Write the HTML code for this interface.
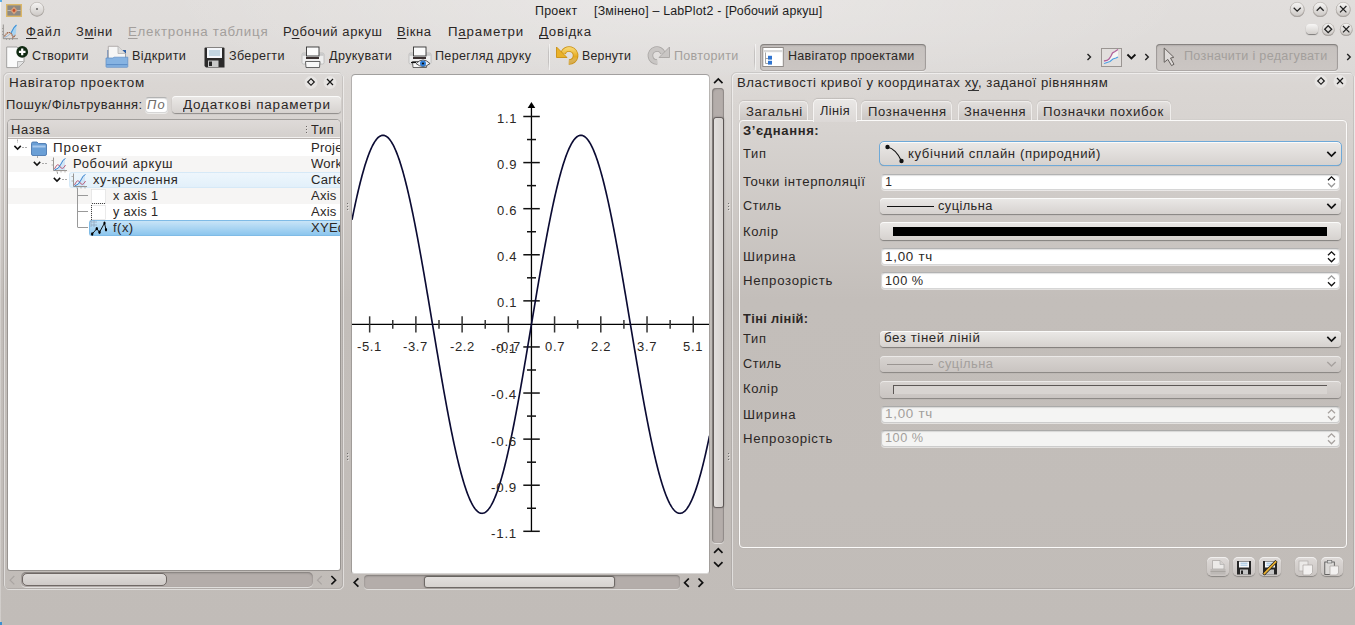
<!DOCTYPE html>
<html><head><meta charset="utf-8"><style>
html,body{margin:0;padding:0;width:1355px;height:625px;overflow:hidden;}
body{position:relative;font-family:"Liberation Sans", sans-serif;background:radial-gradient(ellipse 520px 110px at 678px 0px,rgba(255,255,255,0.28),rgba(255,255,255,0) 100%),linear-gradient(to bottom,#e1dedc 0px,#dfdcda 40px,#dcd9d7 72px,#dad6d3 85px,#d7d3d0 130px,#c3beba 300px,#c2bdb9 500px,#c1bcb8 625px);}
u{text-decoration:underline;text-underline-offset:2px;}
svg{display:block}
</style></head><body>
<svg style="position:absolute;left:6px;top:3.5px;overflow:visible;" width="16" height="13" viewBox="0 0 16 13"><rect x="0.7" y="0.7" width="14.6" height="11.6" fill="#8d8984" stroke="#dcb768" stroke-width="1.4"/><path d="M1.5 6.5 H14.5" stroke="#c8c4c0" stroke-width="0.8"/><path d="M8 2.5 L11.5 6.5 L8 10.5 L4.5 6.5Z" fill="#d9a07a"/><circle cx="8" cy="6.5" r="1.4" fill="#c2502e"/></svg>
<svg style="position:absolute;left:28.5px;top:1.3000000000000007px;overflow:visible;" width="16" height="17" viewBox="0 0 16 17"><defs><linearGradient id="g36593" x1="0" y1="0" x2="0" y2="1"><stop offset="0" stop-color="#f6f5f4"/><stop offset="1" stop-color="#cdc9c6"/></linearGradient></defs><circle cx="8" cy="8.5" r="7.2" fill="#8f8a86" opacity="0.8"/><circle cx="8" cy="8" r="6.7" fill="url(#g36593)" stroke="#bdb8b4" stroke-width="0.6"/><circle cx="8" cy="8" r="0.9" fill="#555"/></svg>
<div style="position:absolute;left:534.90px;top:3.74px;font-size:12px;line-height:normal;transform:scaleX(1.0325);transform-origin:0 0;letter-spacing:0.249px;color:#1c1c1c;white-space:pre;z-index:5">Проект</div>
<div style="position:absolute;left:593.90px;top:3.74px;font-size:12px;line-height:normal;transform:scaleX(1.0325);transform-origin:0 0;letter-spacing:0.182px;color:#1c1c1c;white-space:pre;z-index:5">[Змінено] – LabPlot2 - [Робочий аркуш]</div>
<svg style="position:absolute;left:1289.3px;top:1.3999999999999995px;overflow:visible;" width="16.4" height="17.4" viewBox="0 0 16.4 17.4"><defs><linearGradient id="g1297596" x1="0" y1="0" x2="0" y2="1"><stop offset="0" stop-color="#f6f5f4"/><stop offset="1" stop-color="#cdc9c6"/></linearGradient></defs><circle cx="8.2" cy="8.7" r="7.4" fill="#8f8a86" opacity="0.8"/><circle cx="8.2" cy="8.2" r="6.9" fill="url(#g1297596)" stroke="#bdb8b4" stroke-width="0.6"/><path d="M4.699999999999999 6.699999999999999 L8.2 10.2 L11.7 6.699999999999999" stroke="#222" stroke-width="1.25" fill="none"/></svg>
<svg style="position:absolute;left:1312.1px;top:1.3999999999999995px;overflow:visible;" width="16.4" height="17.4" viewBox="0 0 16.4 17.4"><defs><linearGradient id="g1320396" x1="0" y1="0" x2="0" y2="1"><stop offset="0" stop-color="#f6f5f4"/><stop offset="1" stop-color="#cdc9c6"/></linearGradient></defs><circle cx="8.2" cy="8.7" r="7.4" fill="#8f8a86" opacity="0.8"/><circle cx="8.2" cy="8.2" r="6.9" fill="url(#g1320396)" stroke="#bdb8b4" stroke-width="0.6"/><path d="M4.699999999999999 9.7 L8.2 6.199999999999999 L11.7 9.7" stroke="#222" stroke-width="1.25" fill="none"/></svg>
<svg style="position:absolute;left:1335.1px;top:1.3999999999999995px;overflow:visible;" width="16.4" height="17.4" viewBox="0 0 16.4 17.4"><defs><linearGradient id="g1343396" x1="0" y1="0" x2="0" y2="1"><stop offset="0" stop-color="#f6f5f4"/><stop offset="1" stop-color="#cdc9c6"/></linearGradient></defs><circle cx="8.2" cy="8.7" r="7.4" fill="#8f8a86" opacity="0.8"/><circle cx="8.2" cy="8.2" r="6.9" fill="url(#g1343396)" stroke="#bdb8b4" stroke-width="0.6"/><path d="M4.999999999999999 4.999999999999999 L11.399999999999999 11.399999999999999 M11.399999999999999 4.999999999999999 L4.999999999999999 11.399999999999999" stroke="#222" stroke-width="1.2" fill="none"/></svg>
<svg style="position:absolute;left:2px;top:24px;overflow:visible;" width="16" height="16" viewBox="0 0 16 16"><path d="M11 13 L9 8 L12 3 L14.5 1 L14 9 L12 13Z" fill="#a9d3f0"/><path d="M9 9 L12 3.5 L14.5 1" stroke="#3f92d6" stroke-width="1.1" fill="none"/><path d="M1.3 0.5 V14.7 H16" stroke="#8c8885" stroke-width="0.9" fill="none"/><path d="M0 4.5 H1.3 M0 7.5 H1.3 M0 10.5 H1.3 M4.5 14.7 V16 M7.5 14.7 V16 M10.5 14.7 V16" stroke="#9a9693" stroke-width="0.8"/><path d="M2.5 12.5 Q4.5 8.5 7 8.5 T11 13.5 L13.5 11" stroke="#9a5a3a" stroke-width="1.2" fill="none" stroke-dasharray="1.4 0.6"/><path d="M2.5 13.5 Q6 12 8 10" stroke="#9ab8d8" stroke-width="1" fill="none"/></svg>
<div style="position:absolute;left:25.60px;top:25.34px;font-size:12px;line-height:normal;transform:scaleX(1.0844);transform-origin:0 0;letter-spacing:0.766px;color:#2b2725;white-space:pre;z-index:5"><u>Ф</u>айл</div>
<div style="position:absolute;left:75.90px;top:25.34px;font-size:12px;line-height:normal;transform:scaleX(1.0746);transform-origin:0 0;letter-spacing:0.547px;color:#2b2725;white-space:pre;z-index:5">З<u>м</u>іни</div>
<div style="position:absolute;left:127.50px;top:25.34px;font-size:12px;line-height:normal;transform:scaleX(1.1089);transform-origin:0 0;letter-spacing:0.662px;color:#a39f9c;white-space:pre;z-index:5"><u>Е</u>лектронна таблиця</div>
<div style="position:absolute;left:282.90px;top:25.34px;font-size:12px;line-height:normal;transform:scaleX(1.0832);transform-origin:0 0;letter-spacing:0.543px;color:#2b2725;white-space:pre;z-index:5">Р<u>о</u>бочий аркуш</div>
<div style="position:absolute;left:397.40px;top:25.34px;font-size:12px;line-height:normal;transform:scaleX(1.0832);transform-origin:0 0;letter-spacing:0.561px;color:#2b2725;white-space:pre;z-index:5"><u>В</u>ікна</div>
<div style="position:absolute;left:447.80px;top:25.34px;font-size:12px;line-height:normal;transform:scaleX(1.1052);transform-origin:0 0;letter-spacing:0.738px;color:#2b2725;white-space:pre;z-index:5">П<u>а</u>раметри</div>
<div style="position:absolute;left:538.60px;top:25.34px;font-size:12px;line-height:normal;transform:scaleX(1.1022);transform-origin:0 0;letter-spacing:0.667px;color:#2b2725;white-space:pre;z-index:5"><u>Д</u>овідка</div>
<div style="position:absolute;left:1305.8px;top:24px;width:12.2px;height:10px;background:linear-gradient(#f7f6f5,#d3cfcc);border-radius:4px;box-shadow:0 1px 1px rgba(0,0,0,0.45)"></div>
<svg style="position:absolute;left:1320.7px;top:22.1px;overflow:visible;" width="14.4" height="15.4" viewBox="0 0 14.4 15.4"><defs><linearGradient id="g13279293" x1="0" y1="0" x2="0" y2="1"><stop offset="0" stop-color="#f6f5f4"/><stop offset="1" stop-color="#cdc9c6"/></linearGradient></defs><circle cx="7.2" cy="7.7" r="6.4" fill="#8f8a86" opacity="0.8"/><circle cx="7.2" cy="7.2" r="5.9" fill="url(#g13279293)" stroke="#bdb8b4" stroke-width="0.6"/><path d="M7.2 3.7 L10.7 7.2 L7.2 10.7 L3.7 7.2 Z" stroke="#222" stroke-width="1.3" fill="none"/></svg>
<svg style="position:absolute;left:1338.8999999999999px;top:22.1px;overflow:visible;" width="14.4" height="15.4" viewBox="0 0 14.4 15.4"><defs><linearGradient id="g13461293" x1="0" y1="0" x2="0" y2="1"><stop offset="0" stop-color="#f6f5f4"/><stop offset="1" stop-color="#cdc9c6"/></linearGradient></defs><circle cx="7.2" cy="7.7" r="6.4" fill="#8f8a86" opacity="0.8"/><circle cx="7.2" cy="7.2" r="5.9" fill="url(#g13461293)" stroke="#bdb8b4" stroke-width="0.6"/><path d="M4.0 4.0 L10.4 10.4 M10.4 4.0 L4.0 10.4" stroke="#222" stroke-width="1.2" fill="none"/></svg>
<svg style="position:absolute;left:6px;top:46px;overflow:visible;" width="22" height="22" viewBox="0 0 22 22"><path d="M0.7 1 H11 L18 8 V16 L12 21.6 H0.7 Z" fill="#fafafa" stroke="#9a9897" stroke-width="0.9"/><path d="M11.5 21.3 V15.5 H17.6" fill="#e2e2e2" stroke="#aaa" stroke-width="0.8"/><circle cx="16.2" cy="5.9" r="5.9" fill="#102a12"/><path d="M16.2 2.6 V9.2 M12.9 5.9 H19.5" stroke="#fff" stroke-width="2.2"/></svg>
<div style="position:absolute;left:32.20px;top:49.14px;font-size:12px;line-height:normal;transform:scaleX(1.0365);transform-origin:0 0;letter-spacing:0.265px;color:#2b2725;white-space:pre;z-index:5">Створити</div>
<svg style="position:absolute;left:105px;top:45px;overflow:visible;" width="24" height="24" viewBox="0 0 24 24"><path d="M2.5 5 H21 V14 H2.5Z" fill="#2d5fa8"/><path d="M3.3 1.3 H13 L20.5 8.5 V14 H3.3Z" fill="#f6f6f6" stroke="#a3a09e" stroke-width="0.8"/><path d="M13 1.3 V8.5 H20.5" fill="#dcdcdc" stroke="#aaa" stroke-width="0.7"/><path d="M1 13 H8 L9 12.2 H22.8 V21.5 Q22.8 22.3 22 22.3 H1.8 Q1 22.3 1 21.5Z" fill="#86b3e2" stroke="#5d8cc4" stroke-width="0.7"/><rect x="1.3" y="19" width="21.2" height="1.2" fill="#5f8fc8"/></svg>
<div style="position:absolute;left:131.80px;top:49.14px;font-size:12px;line-height:normal;transform:scaleX(1.0557);transform-origin:0 0;letter-spacing:0.365px;color:#2b2725;white-space:pre;z-index:5">Відкрити</div>
<svg style="position:absolute;left:203.5px;top:46.5px;overflow:visible;" width="21" height="21" viewBox="0 0 21 21"><path d="M0.5 1.5 Q0.5 0.5 1.5 0.5 H19.5 Q20.5 0.5 20.5 1.5 V20.5 H2 L0.5 19Z" fill="#2b2a2a"/><rect x="3" y="1" width="15" height="10" fill="#f4f6fa"/><path d="M5 4 H16 M5 6 H16 M5 8 H16" stroke="#86aec4" stroke-width="0.9"/><rect x="4" y="13.5" width="10.5" height="6.5" fill="#c9c9c9"/><rect x="5" y="14.5" width="3" height="4.5" fill="#262626"/></svg>
<div style="position:absolute;left:229.10px;top:49.14px;font-size:12px;line-height:normal;transform:scaleX(1.0485);transform-origin:0 0;letter-spacing:0.334px;color:#2b2725;white-space:pre;z-index:5">Зберегти</div>
<svg style="position:absolute;left:301px;top:45.5px;overflow:visible;" width="24" height="24" viewBox="0 0 24 24"><rect x="1" y="7" width="22" height="11" rx="1.5" fill="#eeeeee" stroke="#b5b5b5" stroke-width="0.8"/><rect x="1.3" y="7.3" width="21.4" height="2.5" fill="#c8c8c8"/><rect x="5.5" y="1" width="12.5" height="9" fill="#fbfbfb" stroke="#333" stroke-width="0.9"/><rect x="5" y="11" width="13" height="2" fill="#3a3030"/><path d="M4.5 15.5 H19 L18.5 21.5 H5Z" fill="#f7f7f7" stroke="#555" stroke-width="0.9"/></svg>
<div style="position:absolute;left:328.70px;top:49.14px;font-size:12px;line-height:normal;transform:scaleX(1.0518);transform-origin:0 0;letter-spacing:0.350px;color:#2b2725;white-space:pre;z-index:5">Друкувати</div>
<svg style="position:absolute;left:408px;top:45.5px;overflow:visible;" width="24" height="24" viewBox="0 0 24 24"><rect x="1" y="7" width="22" height="11" rx="1.5" fill="#eeeeee" stroke="#b5b5b5" stroke-width="0.8"/><rect x="1.3" y="7.3" width="21.4" height="2.5" fill="#c8c8c8"/><rect x="5.5" y="1" width="12.5" height="9" fill="#fbfbfb" stroke="#333" stroke-width="0.9"/><rect x="5" y="11" width="13" height="2" fill="#3a3030"/><path d="M4.5 15.5 H19 L18.5 21.5 H5Z" fill="#f7f7f7" stroke="#555" stroke-width="0.9"/><path d="M8 17.5 Q15 10.5 22 17.5 Q15 23.5 8 17.5Z" fill="#eef1f6" stroke="#444" stroke-width="0.9"/><circle cx="15" cy="17.5" r="3" fill="#2f7ed8"/><circle cx="15" cy="17.5" r="1.1" fill="#111"/><path d="M3 16.5 H8" stroke="#111" stroke-width="1.2"/></svg>
<div style="position:absolute;left:434.50px;top:49.14px;font-size:12px;line-height:normal;transform:scaleX(1.0484);transform-origin:0 0;letter-spacing:0.311px;color:#2b2725;white-space:pre;z-index:5">Перегляд друку</div>
<div style="position:absolute;left:548px;top:43.5px;width:1px;height:26px;background:linear-gradient(rgba(0,0,0,0),rgba(0,0,0,0.13) 30%,rgba(0,0,0,0.13) 70%,rgba(0,0,0,0));box-shadow:1px 0 0 rgba(255,255,255,0.55)"></div>
<svg style="position:absolute;left:555px;top:45px;overflow:visible;" width="24" height="22" viewBox="0 0 24 22"><defs><linearGradient id="ug" x1="0" y1="0" x2="0" y2="1"><stop offset="0" stop-color="#f6d36a"/><stop offset="0.6" stop-color="#e4a91f"/><stop offset="1" stop-color="#ecd9a8" stop-opacity="0.4"/></linearGradient></defs><path d="M8 8.2 A6.5 6.5 0 1 1 13.8 17" stroke="#c98f12" stroke-width="5.6" fill="none"/><path d="M8 8.2 A6.5 6.5 0 1 1 13.8 17" stroke="url(#ug)" stroke-width="4" fill="none"/><path d="M1.5 2 V12.5 H12Z" fill="#eab22a" stroke="#c98f12" stroke-width="0.9" stroke-linejoin="round"/></svg>
<div style="position:absolute;left:581.60px;top:49.14px;font-size:12px;line-height:normal;transform:scaleX(1.0294);transform-origin:0 0;letter-spacing:0.220px;color:#2b2725;white-space:pre;z-index:5">Вернути</div>
<svg style="position:absolute;left:647px;top:45px;overflow:visible;" width="24" height="22" viewBox="0 0 24 22"><path d="M16 8.2 A6.5 6.5 0 1 0 10.2 17" stroke="#a8a5a3" stroke-width="5.6" fill="none"/><path d="M16 8.2 A6.5 6.5 0 1 0 10.2 17" stroke="#c9c6c4" stroke-width="4" fill="none"/><path d="M22.5 2 V12.5 H12Z" fill="#c9c6c4" stroke="#a8a5a3" stroke-width="0.9" stroke-linejoin="round"/></svg>
<div style="position:absolute;left:673.80px;top:49.14px;font-size:12px;line-height:normal;transform:scaleX(1.0438);transform-origin:0 0;letter-spacing:0.309px;color:#a39f9c;white-space:pre;z-index:5">Повторити</div>
<div style="position:absolute;left:754px;top:43.5px;width:1px;height:26px;background:linear-gradient(rgba(0,0,0,0),rgba(0,0,0,0.13) 30%,rgba(0,0,0,0.13) 70%,rgba(0,0,0,0));box-shadow:1px 0 0 rgba(255,255,255,0.55)"></div>
<div style="position:absolute;left:759.5px;top:43.5px;width:166.0px;height:27.0px;background:linear-gradient(#c6c1be,#cbc6c3);box-shadow:inset 0 0 0 1px rgba(0,0,0,0.13), inset 0 1px 2px rgba(0,0,0,0.30), 0 1px 0 rgba(255,255,255,0.6);border-radius:4px;"></div>
<svg style="position:absolute;left:762px;top:47px;overflow:visible;" width="22" height="20" viewBox="0 0 22 20"><rect x="0.8" y="0.5" width="20.5" height="19" fill="#fff" stroke="#8f8a87" stroke-width="1"/><rect x="1.5" y="3" width="19" height="2.2" fill="#d9d9d9"/><path d="M3.5 5.5 V16.5 M3.5 11.5 H6 M3.5 16.5 H6" stroke="#999" stroke-width="0.9" fill="none"/><rect x="6" y="8.8" width="4" height="3.8" fill="#2f74d0"/><rect x="6" y="13.8" width="4" height="3.8" fill="#2f74d0"/></svg>
<div style="position:absolute;left:788.20px;top:49.14px;font-size:12px;line-height:normal;transform:scaleX(1.0451);transform-origin:0 0;letter-spacing:0.278px;color:#2b2725;white-space:pre;z-index:5">Навігатор проектами</div>
<svg style="position:absolute;left:0;top:0;z-index:6" width="1355" height="625"><path d="M1087.5 54 L1090.5 57 L1087.5 60" stroke="#222" stroke-width="1.4" fill="none"/></svg>
<svg style="position:absolute;left:1100.5px;top:48px;overflow:visible;" width="21" height="19" viewBox="0 0 21 19"><rect x="0.5" y="0.5" width="20" height="18" fill="#e2dfdd" stroke="#9a9592" stroke-width="1"/><path d="M3 13 L6 12.5 L8 11 L10 8 L11.5 5 L14 3.5 L17 1.5 L17 9 L13 11.5 L9 14 L3 15.5Z" fill="#f6f5f4"/><path d="M3 13 L6 12.5 L8 11 L10 8 L11.5 5 L14 3.5 L17 1.5" stroke="#b0609a" stroke-width="1.3" fill="none"/><path d="M3 15.5 L6 14.5 L9 13.5 L12 11 L15 10 L17 9" stroke="#4d9ee0" stroke-width="1.3" fill="none"/></svg>
<svg style="position:absolute;left:0;top:0;z-index:6" width="1355" height="625"><path d="M1127.4 54.5 L1131.4 58.5 L1135.4 54.5" stroke="#111" stroke-width="1.8" fill="none"/></svg>
<svg style="position:absolute;left:0;top:0;z-index:6" width="1355" height="625"><path d="M1145.3 54 L1148.3 57 L1145.3 60" stroke="#222" stroke-width="1.4" fill="none"/></svg>
<div style="position:absolute;left:1155.5px;top:43.5px;width:182.0px;height:27.0px;background:linear-gradient(#c6c1be,#cbc6c3);box-shadow:inset 0 0 0 1px rgba(0,0,0,0.13), inset 0 1px 2px rgba(0,0,0,0.30), 0 1px 0 rgba(255,255,255,0.6);border-radius:4px;"></div>
<svg style="position:absolute;left:1163px;top:47px;overflow:visible;" width="14" height="20" viewBox="0 0 14 20"><path d="M1.2 1 V15.3 L4.8 12.4 L8.5 18.6 L11 17.3 L7.5 11.1 L10.8 10.3 Z" fill="#dedad8" stroke="#66615e" stroke-width="1" stroke-linejoin="round"/></svg>
<div style="position:absolute;left:1183.70px;top:49.14px;font-size:12px;line-height:normal;transform:scaleX(1.0500);transform-origin:0 0;letter-spacing:0.295px;color:#a39f9c;white-space:pre;z-index:5">Позначити і редагувати</div>
<svg style="position:absolute;left:0;top:0;z-index:6" width="1355" height="625"><path d="M1347.2 54 L1350.2 57 L1347.2 60" stroke="#222" stroke-width="1.4" fill="none"/></svg>
<div style="position:absolute;left:4px;top:73px;width:340px;height:517px;box-sizing:border-box;border-radius:5px;border:1px solid rgba(255,255,255,0.5);"></div>
<div style="position:absolute;left:3px;top:72px;width:340px;height:517px;box-sizing:border-box;border-radius:5px;border:1px solid rgba(0,0,0,0.085);"></div>
<div style="position:absolute;left:9.10px;top:76.14px;font-size:12px;line-height:normal;transform:scaleX(1.1198);transform-origin:0 0;letter-spacing:0.687px;color:#2b2725;white-space:pre;z-index:5">Навігатор проектом</div>
<svg style="position:absolute;left:303px;top:73.5px;overflow:visible;" width="16" height="17" viewBox="0 0 16 17"><circle cx="8" cy="8.5" r="6.5" fill="#ffffff" opacity="0.35"/><path d="M8 4.7 L11.3 8 L8 11.3 L4.7 8 Z" stroke="#151515" stroke-width="1.15" fill="none"/></svg>
<svg style="position:absolute;left:321.7px;top:73.5px;overflow:visible;" width="16" height="17" viewBox="0 0 16 17"><circle cx="8" cy="8.5" r="6.5" fill="#ffffff" opacity="0.35"/><path d="M5 5 L11 11 M11 5 L5 11" stroke="#151515" stroke-width="1.2" fill="none"/></svg>
<div style="position:absolute;left:5.50px;top:97.64px;font-size:12px;line-height:normal;transform:scaleX(1.0788);transform-origin:0 0;letter-spacing:0.477px;color:#2b2725;white-space:pre;z-index:5">Пошук/Фільтрування:</div>
<div style="position:absolute;left:145px;top:96.5px;width:23px;height:16.5px;box-sizing:border-box;background:#fff;border-radius:4px;border:1px solid rgba(0,0,0,0.16);border-top-color:rgba(0,0,0,0.30);box-shadow:inset 0 1px 1px rgba(0,0,0,0.12), 0 1px 0 rgba(255,255,255,0.55);"></div>
<div style="position:absolute;left:147.10px;top:97.94px;font-size:12px;line-height:normal;transform:scaleX(1.0724);transform-origin:0 0;letter-spacing:1.037px;color:#6f6b68;white-space:pre;z-index:5;font-style:italic">По</div>
<div style="position:absolute;left:172px;top:96px;width:168.5px;height:16.5px;background:linear-gradient(#ebe9e7,#d6d2cf);box-shadow:0 1px 1px rgba(0,0,0,0.35), inset 0 1px 0 rgba(255,255,255,0.8);border-radius:4px;"></div>
<div style="position:absolute;left:183.10px;top:98.34px;font-size:12px;line-height:normal;transform:scaleX(1.1228);transform-origin:0 0;letter-spacing:0.717px;color:#2b2725;white-space:pre;z-index:5">Додаткові параметри</div>
<div style="position:absolute;left:8px;top:119.5px;width:332px;height:450.5px;background:#fff;border-radius:4px 4px 2px 2px;box-shadow:0 0 0 1px rgba(0,0,0,0.22), 0 -1px 0 rgba(0,0,0,0.05);"></div>
<div style="position:absolute;left:8px;top:119.5px;width:332px;height:19.5px;background:linear-gradient(#dedad8,#d3cfcc);border-radius:4px 4px 0 0;box-shadow:inset 0 -1px 0 #b8b3b0, inset 0 -2px 0 #f2f0ef;"></div>
<div style="position:absolute;left:10.60px;top:122.54px;font-size:12px;line-height:normal;transform:scaleX(1.0770);transform-origin:0 0;letter-spacing:0.601px;color:#2b2725;white-space:pre;z-index:5">Назва</div>
<div style="position:absolute;left:306px;top:126px;width:1.2px;height:1.2px;background:#6a6664;box-shadow:0.6px 0.6px 0 #f4f2f1"></div>
<div style="position:absolute;left:306px;top:129px;width:1.2px;height:1.2px;background:#6a6664;box-shadow:0.6px 0.6px 0 #f4f2f1"></div>
<div style="position:absolute;left:306px;top:132px;width:1.2px;height:1.2px;background:#6a6664;box-shadow:0.6px 0.6px 0 #f4f2f1"></div>
<div style="position:absolute;left:310.80px;top:122.54px;font-size:12px;line-height:normal;transform:scaleX(1.0671);transform-origin:0 0;letter-spacing:0.629px;color:#2b2725;white-space:pre;z-index:5">Тип</div>
<div style="position:absolute;left:8px;top:156px;width:332px;height:16px;background:#f6f5f4"></div>
<div style="position:absolute;left:8px;top:188px;width:332px;height:16px;background:#f6f5f4"></div>
<div style="position:absolute;left:68.5px;top:172px;width:271.5px;height:16px;box-sizing:border-box;background:linear-gradient(#eef6fc,#e2f0fa);border:1px solid #d6e9f7;border-right:none;border-radius:3px 0 0 3px;"></div>
<div style="position:absolute;left:88.5px;top:220px;width:251.5px;height:16px;box-sizing:border-box;background:linear-gradient(#c8e4f7,#8cc6ee);border:1px solid #7fbbe6;border-right:none;border-radius:3px 0 0 3px;"></div>
<div style="position:absolute;left:52.80px;top:141.44px;font-size:12px;line-height:normal;transform:scaleX(1.1134);transform-origin:0 0;letter-spacing:0.806px;color:#2b2725;white-space:pre;z-index:5">Проект</div>
<div style="position:absolute;left:72.90px;top:157.04px;font-size:12px;line-height:normal;transform:scaleX(1.0867);transform-origin:0 0;letter-spacing:0.564px;color:#2b2725;white-space:pre;z-index:5">Робочий аркуш</div>
<div style="position:absolute;left:92.70px;top:173.24px;font-size:12px;line-height:normal;transform:scaleX(1.0727);transform-origin:0 0;letter-spacing:0.456px;color:#2b2725;white-space:pre;z-index:5">xy-креслення</div>
<div style="position:absolute;left:112.70px;top:189.24px;font-size:12px;line-height:normal;transform:scaleX(1.0530);transform-origin:0 0;letter-spacing:0.293px;color:#2b2725;white-space:pre;z-index:5">x axis 1</div>
<div style="position:absolute;left:112.70px;top:205.24px;font-size:12px;line-height:normal;transform:scaleX(1.0530);transform-origin:0 0;letter-spacing:0.293px;color:#2b2725;white-space:pre;z-index:5">y axis 1</div>
<div style="position:absolute;left:112.70px;top:221.24px;font-size:12px;line-height:normal;transform:scaleX(1.0829);transform-origin:0 0;letter-spacing:0.442px;color:#2b2725;white-space:pre;z-index:5">f(x)</div>
<div style="position:absolute;left:311px;top:139px;width:29px;height:100px;overflow:hidden;z-index:7"><div style="position:absolute;left:0;top:2.34px;font-size:12px;letter-spacing:0.2px;transform:scaleX(1.09);transform-origin:0 0;color:#2b2725;white-space:pre">Project</div><div style="position:absolute;left:0;top:18.14px;font-size:12px;letter-spacing:0.2px;transform:scaleX(1.09);transform-origin:0 0;color:#2b2725;white-space:pre">Worksheet</div><div style="position:absolute;left:0;top:34.04px;font-size:12px;letter-spacing:0.2px;transform:scaleX(1.09);transform-origin:0 0;color:#2b2725;white-space:pre">CartesianPlot</div><div style="position:absolute;left:0;top:49.94px;font-size:12px;letter-spacing:0.2px;transform:scaleX(1.09);transform-origin:0 0;color:#2b2725;white-space:pre">Axis</div><div style="position:absolute;left:0;top:65.94px;font-size:12px;letter-spacing:0.2px;transform:scaleX(1.09);transform-origin:0 0;color:#2b2725;white-space:pre">Axis</div><div style="position:absolute;left:0;top:82.34px;font-size:12px;letter-spacing:0.2px;transform:scaleX(1.09);transform-origin:0 0;color:#2b2725;white-space:pre">XYEquationCurve</div></div>
<svg style="position:absolute;left:0;top:0;z-index:6" width="1355" height="625"><path d="M14.400000000000002 145.9 L17.6 149.1 L20.8 145.9" stroke="#111" stroke-width="1.5" fill="none"/></svg>
<svg style="position:absolute;left:0;top:0;z-index:6" width="1355" height="625"><path d="M33.8 161.9 L37 165.1 L40.2 161.9" stroke="#111" stroke-width="1.5" fill="none"/></svg>
<svg style="position:absolute;left:0;top:0;z-index:6" width="1355" height="625"><path d="M53.8 177.9 L57 181.1 L60.2 177.9" stroke="#111" stroke-width="1.5" fill="none"/></svg>
<svg style="position:absolute;left:0;top:0;z-index:4" width="1355" height="625"><path d="M17.5 139.5 V143 M22 147.5 H28 M37.5 156 V159 M42 163.5 H48 M57.5 172 V175 M62 179.5 H68" stroke="#aaa" stroke-width="1" stroke-dasharray="2 1" fill="none"/><path d="M77.5 188 V227.5 M78 195.5 H88 M78 211.5 H88 M78 227.5 H88" stroke="#999" stroke-width="1" fill="none"/></svg>
<svg style="position:absolute;left:31px;top:141px;overflow:visible;z-index:5" width="16" height="15" viewBox="0 0 16 15"><path d="M0.5 2.5 Q0.5 1 2 1 H6 L7.5 2.5 H14 Q15.5 2.5 15.5 4 V13 Q15.5 14.5 14 14.5 H2 Q0.5 14.5 0.5 13Z" fill="#6a9fd6" stroke="#3f6fa8" stroke-width="0.8"/><rect x="1.5" y="4.5" width="13" height="2" fill="#a9c9ec"/></svg>
<svg style="position:absolute;left:51px;top:157px;overflow:visible;z-index:5" width="16" height="16" viewBox="0 0 16 16"><path d="M3 13 Q7 11 9 7 T14 1.5 V13Z" fill="#cfe3f5" opacity="0.9"/><path d="M2.5 0.5 V13.5 H16" stroke="#8d8986" stroke-width="0.9" fill="none"/><path d="M0.5 3.5 H2.5 M0.5 8 H2.5 M6 13.5 V15.5 M10 13.5 V15.5 M14 13.5 V15.5" stroke="#a5a19e" stroke-width="0.8"/><path d="M3.5 12 Q6.5 5 9 9.5 T14.5 8" stroke="#b85a78" stroke-width="1" fill="none"/><path d="M3.5 13 Q8 12 10 7 T14.5 1.5" stroke="#3d86d0" stroke-width="1" fill="none"/></svg>
<svg style="position:absolute;left:71px;top:173px;overflow:visible;z-index:5" width="16" height="16" viewBox="0 0 16 16"><path d="M3 13 Q7 11 9 7 T14 1.5 V13Z" fill="#cfe3f5" opacity="0.9"/><path d="M2.5 0.5 V13.5 H16" stroke="#8d8986" stroke-width="0.9" fill="none"/><path d="M0.5 3.5 H2.5 M0.5 8 H2.5 M6 13.5 V15.5 M10 13.5 V15.5 M14 13.5 V15.5" stroke="#a5a19e" stroke-width="0.8"/><path d="M3.5 12 Q6.5 5 9 9.5 T14.5 8" stroke="#b85a78" stroke-width="1" fill="none"/><path d="M3.5 13 Q8 12 10 7 T14.5 1.5" stroke="#3d86d0" stroke-width="1" fill="none"/></svg>
<svg style="position:absolute;left:91px;top:189px;overflow:visible;z-index:5" width="16" height="16" viewBox="0 0 16 16"><rect x="0.5" y="0.5" width="14" height="14" fill="#fff" stroke="#ddd" stroke-width="0.6"/><path d="M1 14.5 H15" stroke="#444" stroke-width="1" stroke-dasharray="1 1"/></svg>
<svg style="position:absolute;left:91px;top:205px;overflow:visible;z-index:5" width="16" height="16" viewBox="0 0 16 16"><rect x="0.5" y="0.5" width="14" height="14" fill="#fff" stroke="#ddd" stroke-width="0.6"/><path d="M0.5 0 V15" stroke="#444" stroke-width="1" stroke-dasharray="1 1"/></svg>
<svg style="position:absolute;left:86px;top:216px;overflow:visible;z-index:6" width="24" height="24" viewBox="0 0 24 24"><path d="M5 4 V11 M8 4 V11 M5 6 H11 M5 9 H11" stroke="#8a9ab0" stroke-width="0.8" opacity="0.8"/><path d="M6.2 18 L10.8 12.7 L13.5 16.2 L18.5 7.1 L20 13.8" stroke="#111" stroke-width="1" fill="none"/><ellipse cx="6.2" cy="18" rx="1.2" ry="1.8" fill="#000"/><ellipse cx="10.8" cy="12.7" rx="1.2" ry="1.6" fill="#000"/><ellipse cx="13.5" cy="16.2" rx="1.1" ry="1.7" fill="#000"/><ellipse cx="18.5" cy="7.1" rx="1.1" ry="1.7" fill="#000"/><ellipse cx="20" cy="13.8" rx="1.1" ry="1.7" fill="#000"/></svg>
<div style="position:absolute;left:20.5px;top:572px;width:292.5px;height:15px;background:#b4adaa;border-radius:5px;box-shadow:inset 0 1px 2px rgba(0,0,0,0.3), 0 1px 0 rgba(255,255,255,0.5)"></div>
<div style="position:absolute;left:21.5px;top:572.5px;width:145px;height:13.5px;box-sizing:border-box;background:linear-gradient(#dfdcda,#cfcac7);border:1.5px solid #6f6865;border-radius:5px;"></div>
<svg style="position:absolute;left:0;top:0;z-index:6" width="1355" height="625"><path d="M14.299999999999999 576.0 L10.1 580.2 L14.299999999999999 584.4000000000001" stroke="#a9a4a1" stroke-width="1.2" fill="none"/></svg>
<svg style="position:absolute;left:0;top:0;z-index:6" width="1355" height="625"><path d="M321.70000000000005 576.0 L317.5 580.2 L321.70000000000005 584.4000000000001" stroke="#a9a4a1" stroke-width="1.2" fill="none"/></svg>
<svg style="position:absolute;left:0;top:0;z-index:6" width="1355" height="625"><path d="M331.4 576.0 L335.6 580.2 L331.4 584.4000000000001" stroke="#111" stroke-width="1.6" fill="none"/></svg>
<div style="position:absolute;left:351.5px;top:74.8px;width:357.5px;height:498px;background:#fff;border-radius:3px 3px 2px 2px;box-shadow:0 0 0 1px rgba(0,0,0,0.06), 0 -1px 0 rgba(0,0,0,0.22), -1px 0 0 rgba(0,0,0,0.12), 1px 0 0 rgba(0,0,0,0.10), 0 1px 0 rgba(255,255,255,0.6)"></div>
<svg style="position:absolute;left:0;top:0;z-index:3" width="1355" height="625"><defs><clipPath id="cv"><rect x="352" y="75" width="357" height="497"/></clipPath></defs><g clip-path="url(#cv)"><path d="M352 324.3 H709" stroke="#000" stroke-width="1.2"/><path d="M369.65 316.3 V332.5" stroke="#333" stroke-width="1.5"/><path d="M415.88 316.3 V332.5" stroke="#333" stroke-width="1.5"/><path d="M462.11 316.3 V332.5" stroke="#333" stroke-width="1.5"/><path d="M508.34 316.3 V332.5" stroke="#333" stroke-width="1.5"/><path d="M554.57 316.3 V332.5" stroke="#333" stroke-width="1.5"/><path d="M600.80 316.3 V332.5" stroke="#333" stroke-width="1.5"/><path d="M647.03 316.3 V332.5" stroke="#333" stroke-width="1.5"/><path d="M693.25 316.3 V332.5" stroke="#333" stroke-width="1.5"/><path d="M392.76 320.1 V328.7" stroke="#333" stroke-width="1.5"/><path d="M438.99 320.1 V328.7" stroke="#333" stroke-width="1.5"/><path d="M485.22 320.1 V328.7" stroke="#333" stroke-width="1.5"/><path d="M577.68 320.1 V328.7" stroke="#333" stroke-width="1.5"/><path d="M623.91 320.1 V328.7" stroke="#333" stroke-width="1.5"/><path d="M670.14 320.1 V328.7" stroke="#333" stroke-width="1.5"/><path d="M531.45 106 V531.8" stroke="#000" stroke-width="1.3"/><path d="M531.45 102 L535.25 108 L527.6500000000001 108 Z" fill="#000"/><path d="M523.3 116.50 H539.8" stroke="#111" stroke-width="1.5"/><path d="M523.3 162.59 H539.8" stroke="#111" stroke-width="1.5"/><path d="M523.3 208.68 H539.8" stroke="#111" stroke-width="1.5"/><path d="M523.3 254.77 H539.8" stroke="#111" stroke-width="1.5"/><path d="M523.3 300.86 H539.8" stroke="#111" stroke-width="1.5"/><path d="M523.3 346.95 H539.8" stroke="#111" stroke-width="1.5"/><path d="M523.3 393.04 H539.8" stroke="#111" stroke-width="1.5"/><path d="M523.3 439.13 H539.8" stroke="#111" stroke-width="1.5"/><path d="M523.3 485.22 H539.8" stroke="#111" stroke-width="1.5"/><path d="M523.3 531.31 H539.8" stroke="#111" stroke-width="1.5"/><path d="M527 139.55 H536" stroke="#111" stroke-width="1.5"/><path d="M527 185.63 H536" stroke="#111" stroke-width="1.5"/><path d="M527 231.73 H536" stroke="#111" stroke-width="1.5"/><path d="M527 277.81 H536" stroke="#111" stroke-width="1.5"/><path d="M527 370.00 H536" stroke="#111" stroke-width="1.5"/><path d="M527 416.09 H536" stroke="#111" stroke-width="1.5"/><path d="M527 462.18 H536" stroke="#111" stroke-width="1.5"/><path d="M527 508.27 H536" stroke="#111" stroke-width="1.5"/><polyline points="352.00,219.72 352.50,217.23 353.00,214.78 353.50,212.34 354.00,209.94 354.50,207.57 355.00,205.22 355.50,202.91 356.00,200.62 356.50,198.37 357.00,196.15 357.50,193.96 358.00,191.81 358.50,189.68 359.00,187.59 359.50,185.54 360.00,183.52 360.50,181.54 361.00,179.59 361.50,177.68 362.00,175.80 362.50,173.97 363.00,172.17 363.50,170.41 364.00,168.68 364.50,167.00 365.00,165.36 365.50,163.76 366.00,162.19 366.50,160.67 367.00,159.19 367.50,157.75 368.00,156.35 368.50,155.00 369.00,153.69 369.50,152.42 370.00,151.19 370.50,150.01 371.00,148.87 371.50,147.78 372.00,146.73 372.50,145.72 373.00,144.76 373.50,143.85 374.00,142.98 374.50,142.15 375.00,141.38 375.50,140.65 376.00,139.96 376.50,139.32 377.00,138.73 377.50,138.18 378.00,137.69 378.50,137.23 379.00,136.83 379.50,136.47 380.00,136.16 380.50,135.90 381.00,135.68 381.50,135.52 382.00,135.40 382.50,135.32 383.00,135.30 383.50,135.32 384.00,135.39 384.50,135.51 385.00,135.68 385.50,135.89 386.00,136.15 386.50,136.46 387.00,136.81 387.50,137.22 388.00,137.67 388.50,138.16 389.00,138.71 389.50,139.30 390.00,139.93 390.50,140.62 391.00,141.35 391.50,142.12 392.00,142.95 392.50,143.81 393.00,144.73 393.50,145.68 394.00,146.69 394.50,147.74 395.00,148.83 395.50,149.96 396.00,151.14 396.50,152.37 397.00,153.64 397.50,154.95 398.00,156.30 398.50,157.70 399.00,159.13 399.50,160.61 400.00,162.13 400.50,163.69 401.00,165.29 401.50,166.94 402.00,168.62 402.50,170.34 403.00,172.10 403.50,173.90 404.00,175.73 404.50,177.60 405.00,179.51 405.50,181.46 406.00,183.44 406.50,185.46 407.00,187.51 407.50,189.60 408.00,191.72 408.50,193.88 409.00,196.06 409.50,198.28 410.00,200.54 410.50,202.82 411.00,205.13 411.50,207.48 412.00,209.85 412.50,212.25 413.00,214.68 413.50,217.14 414.00,219.62 414.50,222.13 415.00,224.67 415.50,227.23 416.00,229.82 416.50,232.43 417.00,235.06 417.50,237.72 418.00,240.39 418.50,243.09 419.00,245.81 419.50,248.55 420.00,251.31 420.50,254.09 421.00,256.88 421.50,259.69 422.00,262.52 422.50,265.36 423.00,268.22 423.50,271.09 424.00,273.98 424.50,276.87 425.00,279.78 425.50,282.70 426.00,285.64 426.50,288.58 427.00,291.53 427.50,294.49 428.00,297.45 428.50,300.42 429.00,303.40 429.50,306.39 430.00,309.38 430.50,312.37 431.00,315.36 431.50,318.36 432.00,321.36 432.50,324.36 433.00,327.36 433.50,330.36 434.00,333.36 434.50,336.35 435.00,339.35 435.50,342.33 436.00,345.32 436.50,348.30 437.00,351.27 437.50,354.23 438.00,357.19 438.50,360.14 439.00,363.08 439.50,366.01 440.00,368.94 440.50,371.84 441.00,374.74 441.50,377.63 442.00,380.50 442.50,383.36 443.00,386.20 443.50,389.02 444.00,391.83 444.50,394.63 445.00,397.40 445.50,400.16 446.00,402.90 446.50,405.62 447.00,408.31 447.50,410.99 448.00,413.65 448.50,416.28 449.00,418.89 449.50,421.47 450.00,424.03 450.50,426.57 451.00,429.08 451.50,431.56 452.00,434.02 452.50,436.45 453.00,438.85 453.50,441.22 454.00,443.56 454.50,445.87 455.00,448.16 455.50,450.41 456.00,452.62 456.50,454.81 457.00,456.96 457.50,459.08 458.00,461.17 458.50,463.22 459.00,465.24 459.50,467.22 460.00,469.16 460.50,471.07 461.00,472.94 461.50,474.78 462.00,476.57 462.50,478.33 463.00,480.05 463.50,481.73 464.00,483.37 464.50,484.97 465.00,486.53 465.50,488.05 466.00,489.53 466.50,490.96 467.00,492.36 467.50,493.71 468.00,495.02 468.50,496.28 469.00,497.50 469.50,498.68 470.00,499.82 470.50,500.91 471.00,501.95 471.50,502.96 472.00,503.91 472.50,504.82 473.00,505.69 473.50,506.51 474.00,507.28 474.50,508.01 475.00,508.69 475.50,509.33 476.00,509.92 476.50,510.46 477.00,510.95 477.50,511.40 478.00,511.80 478.50,512.15 479.00,512.46 479.50,512.72 480.00,512.93 480.50,513.09 481.00,513.21 481.50,513.28 482.00,513.30 482.50,513.27 483.00,513.20 483.50,513.08 484.00,512.91 484.50,512.69 485.00,512.43 485.50,512.11 486.00,511.76 486.50,511.35 487.00,510.90 487.50,510.39 488.00,509.85 488.50,509.25 489.00,508.61 489.50,507.93 490.00,507.19 490.50,506.41 491.00,505.59 491.50,504.72 492.00,503.80 492.50,502.84 493.00,501.83 493.50,500.78 494.00,499.68 494.50,498.54 495.00,497.36 495.50,496.13 496.00,494.86 496.50,493.55 497.00,492.19 497.50,490.79 498.00,489.35 498.50,487.87 499.00,486.34 499.50,484.78 500.00,483.18 500.50,481.53 501.00,479.85 501.50,478.12 502.00,476.36 502.50,474.56 503.00,472.72 503.50,470.85 504.00,468.93 504.50,466.98 505.00,465.00 505.50,462.98 506.00,460.92 506.50,458.83 507.00,456.71 507.50,454.55 508.00,452.36 508.50,450.14 509.00,447.88 509.50,445.60 510.00,443.28 510.50,440.94 511.00,438.56 511.50,436.16 512.00,433.72 512.50,431.26 513.00,428.78 513.50,426.27 514.00,423.73 514.50,421.16 515.00,418.57 515.50,415.96 516.00,413.33 516.50,410.67 517.00,407.99 517.50,405.29 518.00,402.57 518.50,399.83 519.00,397.07 519.50,394.29 520.00,391.50 520.50,388.68 521.00,385.86 521.50,383.01 522.00,380.15 522.50,377.28 523.00,374.39 523.50,371.50 524.00,368.58 524.50,365.66 525.00,362.73 525.50,359.79 526.00,356.84 526.50,353.88 527.00,350.91 527.50,347.94 528.00,344.96 528.50,341.97 529.00,338.99 529.50,335.99 530.00,333.00 530.50,330.00 531.00,327.00 531.50,324.00 532.00,321.00 532.50,318.00 533.00,315.00 533.50,312.01 534.00,309.02 534.50,306.03 535.00,303.05 535.50,300.07 536.00,297.09 536.50,294.13 537.00,291.17 537.50,288.22 538.00,285.28 538.50,282.35 539.00,279.43 539.50,276.52 540.00,273.63 540.50,270.74 541.00,267.87 541.50,265.02 542.00,262.18 542.50,259.35 543.00,256.54 543.50,253.75 544.00,250.98 544.50,248.22 545.00,245.48 545.50,242.77 546.00,240.07 546.50,237.40 547.00,234.74 547.50,232.11 548.00,229.51 548.50,226.92 549.00,224.36 549.50,221.83 550.00,219.32 550.50,216.84 551.00,214.39 551.50,211.96 552.00,209.56 552.50,207.19 553.00,204.85 553.50,202.54 554.00,200.26 554.50,198.02 555.00,195.80 555.50,193.62 556.00,191.47 556.50,189.35 557.00,187.27 557.50,185.22 558.00,183.20 558.50,181.22 559.00,179.28 559.50,177.38 560.00,175.51 560.50,173.68 561.00,171.88 561.50,170.13 562.00,168.41 562.50,166.74 563.00,165.10 563.50,163.50 564.00,161.95 564.50,160.43 565.00,158.96 565.50,157.53 566.00,156.13 566.50,154.79 567.00,153.48 567.50,152.22 568.00,151.00 568.50,149.82 569.00,148.69 569.50,147.61 570.00,146.56 570.50,145.57 571.00,144.61 571.50,143.71 572.00,142.84 572.50,142.03 573.00,141.26 573.50,140.53 574.00,139.86 574.50,139.22 575.00,138.64 575.50,138.10 576.00,137.61 576.50,137.17 577.00,136.77 577.50,136.42 578.00,136.12 578.50,135.86 579.00,135.65 579.50,135.49 580.00,135.38 580.50,135.32 581.00,135.30 581.50,135.33 582.00,135.41 582.50,135.53 583.00,135.71 583.50,135.93 584.00,136.20 584.50,136.51 585.00,136.88 585.50,137.29 586.00,137.74 586.50,138.25 587.00,138.80 587.50,139.40 588.00,140.04 588.50,140.73 589.00,141.47 589.50,142.25 590.00,143.08 590.50,143.96 591.00,144.88 591.50,145.84 592.00,146.85 592.50,147.91 593.00,149.01 593.50,150.15 594.00,151.34 594.50,152.57 595.00,153.84 595.50,155.16 596.00,156.52 596.50,157.92 597.00,159.37 597.50,160.85 598.00,162.38 598.50,163.95 599.00,165.55 599.50,167.20 600.00,168.89 600.50,170.62 601.00,172.38 601.50,174.19 602.00,176.03 602.50,177.91 603.00,179.82 603.50,181.77 604.00,183.76 604.50,185.79 605.00,187.84 605.50,189.94 606.00,192.06 606.50,194.22 607.00,196.42 607.50,198.64 608.00,200.90 608.50,203.19 609.00,205.50 609.50,207.85 610.00,210.23 610.50,212.64 611.00,215.07 611.50,217.53 612.00,220.02 612.50,222.54 613.00,225.08 613.50,227.64 614.00,230.23 614.50,232.85 615.00,235.48 615.50,238.14 616.00,240.82 616.50,243.53 617.00,246.25 617.50,248.99 618.00,251.75 618.50,254.53 619.00,257.33 619.50,260.14 620.00,262.97 620.50,265.82 621.00,268.68 621.50,271.55 622.00,274.44 622.50,277.34 623.00,280.25 623.50,283.17 624.00,286.10 624.50,289.05 625.00,292.00 625.50,294.96 626.00,297.93 626.50,300.90 627.00,303.88 627.50,306.86 628.00,309.85 628.50,312.85 629.00,315.84 629.50,318.84 630.00,321.84 630.50,324.84 631.00,327.84 631.50,330.84 632.00,333.83 632.50,336.83 633.00,339.82 633.50,342.81 634.00,345.79 634.50,348.77 635.00,351.74 635.50,354.71 636.00,357.66 636.50,360.61 637.00,363.55 637.50,366.48 638.00,369.40 638.50,372.31 639.00,375.20 639.50,378.09 640.00,380.95 640.50,383.81 641.00,386.65 641.50,389.47 642.00,392.28 642.50,395.07 643.00,397.84 643.50,400.60 644.00,403.33 644.50,406.05 645.00,408.74 645.50,411.42 646.00,414.07 646.50,416.70 647.00,419.30 647.50,421.88 648.00,424.44 648.50,426.97 649.00,429.48 649.50,431.96 650.00,434.41 650.50,436.83 651.00,439.23 651.50,441.60 652.00,443.93 652.50,446.24 653.00,448.52 653.50,450.76 654.00,452.98 654.50,455.16 655.00,457.30 655.50,459.42 656.00,461.50 656.50,463.55 657.00,465.56 657.50,467.53 658.00,469.47 658.50,471.37 659.00,473.24 659.50,475.07 660.00,476.86 660.50,478.61 661.00,480.32 661.50,481.99 662.00,483.63 662.50,485.22 663.00,486.78 663.50,488.29 664.00,489.76 664.50,491.19 665.00,492.57 665.50,493.92 666.00,495.22 666.50,496.48 667.00,497.69 667.50,498.87 668.00,499.99 668.50,501.08 669.00,502.12 669.50,503.11 670.00,504.06 670.50,504.96 671.00,505.82 671.50,506.64 672.00,507.40 672.50,508.12 673.00,508.80 673.50,509.42 674.00,510.01 674.50,510.54 675.00,511.03 675.50,511.47 676.00,511.86 676.50,512.21 677.00,512.50 677.50,512.76 678.00,512.96 678.50,513.12 679.00,513.22 679.50,513.29 680.00,513.30 680.50,513.26 681.00,513.18 681.50,513.05 682.00,512.88 682.50,512.65 683.00,512.38 683.50,512.06 684.00,511.69 684.50,511.28 685.00,510.82 685.50,510.31 686.00,509.76 686.50,509.15 687.00,508.51 687.50,507.81 688.00,507.07 688.50,506.28 689.00,505.45 689.50,504.57 690.00,503.65 690.50,502.68 691.00,501.67 691.50,500.61 692.00,499.50 692.50,498.36 693.00,497.17 693.50,495.93 694.00,494.65 694.50,493.33 695.00,491.97 695.50,490.56 696.00,489.12 696.50,487.63 697.00,486.10 697.50,484.53 698.00,482.92 698.50,481.27 699.00,479.57 699.50,477.84 700.00,476.08 700.50,474.27 701.00,472.42 701.50,470.54 702.00,468.62 702.50,466.67 703.00,464.68 703.50,462.65 704.00,460.59 704.50,458.49 705.00,456.37 705.50,454.20 706.00,452.01 706.50,449.78 707.00,447.52 707.50,445.23 708.00,442.91 708.50,440.56 709.00,438.18 709.50,435.77" fill="none" stroke="#0b0b33" stroke-width="1.65"/></g></svg>
<div style="position:absolute;left:357.25px;top:339.74px;font-size:12px;line-height:normal;transform:scaleX(1.0849);transform-origin:0 0;letter-spacing:0.540px;color:#2b2725;white-space:pre;z-index:4">-5.1</div>
<div style="position:absolute;left:403.48px;top:339.74px;font-size:12px;line-height:normal;transform:scaleX(1.0849);transform-origin:0 0;letter-spacing:0.540px;color:#2b2725;white-space:pre;z-index:4">-3.7</div>
<div style="position:absolute;left:449.71px;top:339.74px;font-size:12px;line-height:normal;transform:scaleX(1.0849);transform-origin:0 0;letter-spacing:0.540px;color:#2b2725;white-space:pre;z-index:4">-2.2</div>
<div style="position:absolute;left:495.94px;top:339.74px;font-size:12px;line-height:normal;transform:scaleX(1.0849);transform-origin:0 0;letter-spacing:0.540px;color:#2b2725;white-space:pre;z-index:4">-0.7</div>
<div style="position:absolute;left:544.57px;top:339.74px;font-size:12px;line-height:normal;transform:scaleX(1.0813);transform-origin:0 0;letter-spacing:0.627px;color:#2b2725;white-space:pre;z-index:4">0.7</div>
<div style="position:absolute;left:590.80px;top:339.74px;font-size:12px;line-height:normal;transform:scaleX(1.0813);transform-origin:0 0;letter-spacing:0.627px;color:#2b2725;white-space:pre;z-index:4">2.2</div>
<div style="position:absolute;left:637.03px;top:339.74px;font-size:12px;line-height:normal;transform:scaleX(1.0813);transform-origin:0 0;letter-spacing:0.627px;color:#2b2725;white-space:pre;z-index:4">3.7</div>
<div style="position:absolute;left:683.25px;top:339.74px;font-size:12px;line-height:normal;transform:scaleX(1.0813);transform-origin:0 0;letter-spacing:0.627px;color:#2b2725;white-space:pre;z-index:4">5.1</div>
<div style="position:absolute;left:496.70px;top:111.94px;font-size:12px;line-height:normal;transform:scaleX(1.0813);transform-origin:0 0;letter-spacing:0.627px;color:#2b2725;white-space:pre;z-index:4">1.1</div>
<div style="position:absolute;left:496.70px;top:158.03px;font-size:12px;line-height:normal;transform:scaleX(1.0813);transform-origin:0 0;letter-spacing:0.627px;color:#2b2725;white-space:pre;z-index:4">0.9</div>
<div style="position:absolute;left:496.70px;top:204.12px;font-size:12px;line-height:normal;transform:scaleX(1.0813);transform-origin:0 0;letter-spacing:0.627px;color:#2b2725;white-space:pre;z-index:4">0.6</div>
<div style="position:absolute;left:496.70px;top:250.21px;font-size:12px;line-height:normal;transform:scaleX(1.0813);transform-origin:0 0;letter-spacing:0.627px;color:#2b2725;white-space:pre;z-index:4">0.4</div>
<div style="position:absolute;left:496.70px;top:296.30px;font-size:12px;line-height:normal;transform:scaleX(1.0813);transform-origin:0 0;letter-spacing:0.627px;color:#2b2725;white-space:pre;z-index:4">0.1</div>
<div style="position:absolute;left:490.80px;top:342.39px;font-size:12px;line-height:normal;transform:scaleX(1.1115);transform-origin:0 0;letter-spacing:0.692px;color:#2b2725;white-space:pre;z-index:4">-0.1</div>
<div style="position:absolute;left:490.80px;top:388.48px;font-size:12px;line-height:normal;transform:scaleX(1.1115);transform-origin:0 0;letter-spacing:0.692px;color:#2b2725;white-space:pre;z-index:4">-0.4</div>
<div style="position:absolute;left:490.80px;top:434.57px;font-size:12px;line-height:normal;transform:scaleX(1.1115);transform-origin:0 0;letter-spacing:0.692px;color:#2b2725;white-space:pre;z-index:4">-0.6</div>
<div style="position:absolute;left:490.80px;top:480.66px;font-size:12px;line-height:normal;transform:scaleX(1.1115);transform-origin:0 0;letter-spacing:0.692px;color:#2b2725;white-space:pre;z-index:4">-0.9</div>
<div style="position:absolute;left:490.80px;top:526.75px;font-size:12px;line-height:normal;transform:scaleX(1.1115);transform-origin:0 0;letter-spacing:0.692px;color:#2b2725;white-space:pre;z-index:4">-1.1</div>
<svg style="position:absolute;left:0;top:0;z-index:6" width="1355" height="625"><path d="M714.0999999999999 83.1 L718.3 78.9 L722.5 83.1" stroke="#111" stroke-width="1.7" fill="none"/></svg>
<div style="position:absolute;left:712.3px;top:88.2px;width:12.2px;height:455.3px;background:#b4adaa;border-radius:4px;box-shadow:inset 1px 1px 1.5px rgba(0,0,0,0.28), inset -1px 0 1px rgba(0,0,0,0.2), 0 1px 0 rgba(255,255,255,0.5)"></div>
<div style="position:absolute;left:713.8px;top:117.5px;width:9.5px;height:389.5px;box-sizing:border-box;background:linear-gradient(to right,#e2dfdd,#d6d2cf);border-radius:2.5px;box-shadow:0 0 0 1px rgba(60,55,52,0.55), 0 0 1.5px 1.5px rgba(0,0,0,0.15)"></div>
<svg style="position:absolute;left:0;top:0;z-index:6" width="1355" height="625"><path d="M714.0999999999999 552.8000000000001 L718.3 548.6 L722.5 552.8000000000001" stroke="#111" stroke-width="1.7" fill="none"/></svg>
<svg style="position:absolute;left:0;top:0;z-index:6" width="1355" height="625"><path d="M714.0999999999999 562.1 L718.3 566.3000000000001 L722.5 562.1" stroke="#111" stroke-width="1.7" fill="none"/></svg>
<svg style="position:absolute;left:0;top:0;z-index:6" width="1355" height="625"><path d="M358.40000000000003 578.3 L354.2 582.5 L358.40000000000003 586.7" stroke="#111" stroke-width="1.7" fill="none"/></svg>
<div style="position:absolute;left:364px;top:575.3px;width:315.6px;height:13.7px;background:#b4adaa;border-radius:4px;box-shadow:inset 0 1px 2px rgba(0,0,0,0.3), 0 1px 0 rgba(255,255,255,0.5)"></div>
<div style="position:absolute;left:425px;top:576.8px;width:189px;height:10.5px;box-sizing:border-box;background:linear-gradient(#e2dfdd,#d6d2cf);border-radius:2.5px;box-shadow:0 0 0 1px rgba(60,55,52,0.5), 0 0 1.5px 1.5px rgba(0,0,0,0.12)"></div>
<svg style="position:absolute;left:0;top:0;z-index:6" width="1355" height="625"><path d="M688.8000000000001 578.5 L684.6 582.7 L688.8000000000001 586.9000000000001" stroke="#111" stroke-width="1.7" fill="none"/></svg>
<svg style="position:absolute;left:0;top:0;z-index:6" width="1355" height="625"><path d="M698.5 578.5 L702.7 582.7 L698.5 586.9000000000001" stroke="#111" stroke-width="1.7" fill="none"/></svg>
<div style="position:absolute;left:346.9px;top:202.5px;width:1.3px;height:1.3px;background:#555;border-radius:1px;box-shadow:0.7px 0.7px 0 #fff"></div>
<div style="position:absolute;left:346.9px;top:205.5px;width:1.3px;height:1.3px;background:#555;border-radius:1px;box-shadow:0.7px 0.7px 0 #fff"></div>
<div style="position:absolute;left:346.9px;top:208.5px;width:1.3px;height:1.3px;background:#555;border-radius:1px;box-shadow:0.7px 0.7px 0 #fff"></div>
<div style="position:absolute;left:346.9px;top:452.5px;width:1.3px;height:1.3px;background:#555;border-radius:1px;box-shadow:0.7px 0.7px 0 #fff"></div>
<div style="position:absolute;left:346.9px;top:455.5px;width:1.3px;height:1.3px;background:#555;border-radius:1px;box-shadow:0.7px 0.7px 0 #fff"></div>
<div style="position:absolute;left:346.9px;top:458.5px;width:1.3px;height:1.3px;background:#555;border-radius:1px;box-shadow:0.7px 0.7px 0 #fff"></div>
<div style="position:absolute;left:727.7px;top:202.5px;width:1.3px;height:1.3px;background:#555;border-radius:1px;box-shadow:0.7px 0.7px 0 #fff"></div>
<div style="position:absolute;left:727.7px;top:205.5px;width:1.3px;height:1.3px;background:#555;border-radius:1px;box-shadow:0.7px 0.7px 0 #fff"></div>
<div style="position:absolute;left:727.7px;top:208.5px;width:1.3px;height:1.3px;background:#555;border-radius:1px;box-shadow:0.7px 0.7px 0 #fff"></div>
<div style="position:absolute;left:727.7px;top:452.5px;width:1.3px;height:1.3px;background:#555;border-radius:1px;box-shadow:0.7px 0.7px 0 #fff"></div>
<div style="position:absolute;left:727.7px;top:455.5px;width:1.3px;height:1.3px;background:#555;border-radius:1px;box-shadow:0.7px 0.7px 0 #fff"></div>
<div style="position:absolute;left:727.7px;top:458.5px;width:1.3px;height:1.3px;background:#555;border-radius:1px;box-shadow:0.7px 0.7px 0 #fff"></div>
<div style="position:absolute;left:732px;top:73px;width:623px;height:517px;box-sizing:border-box;border-radius:5px;border:1px solid rgba(255,255,255,0.5);"></div>
<div style="position:absolute;left:731px;top:72px;width:623px;height:517px;box-sizing:border-box;border-radius:5px;border:1px solid rgba(0,0,0,0.085);"></div>
<div style="position:absolute;left:736.90px;top:76.24px;font-size:12px;line-height:normal;transform:scaleX(1.0950);transform-origin:0 0;letter-spacing:0.510px;color:#2b2725;white-space:pre;z-index:5">Властивості кривої у координатах xy, заданої рівнянням</div>
<div style="position:absolute;left:967.5px;top:89.6px;width:11.5px;height:1px;background:#333"></div>
<svg style="position:absolute;left:1313px;top:73.3px;overflow:visible;" width="16" height="17" viewBox="0 0 16 17"><circle cx="8" cy="8.5" r="6.5" fill="#ffffff" opacity="0.35"/><path d="M8 4.7 L11.3 8 L8 11.3 L4.7 8 Z" stroke="#151515" stroke-width="1.15" fill="none"/></svg>
<svg style="position:absolute;left:1332px;top:73.3px;overflow:visible;" width="16" height="17" viewBox="0 0 16 17"><circle cx="8" cy="8.5" r="6.5" fill="#ffffff" opacity="0.35"/><path d="M5 5 L11 11 M11 5 L5 11" stroke="#151515" stroke-width="1.2" fill="none"/></svg>
<div style="position:absolute;left:738.5px;top:120px;width:608.5px;height:428px;box-sizing:border-box;border-radius:4px;border:1px solid #fbfaf9;box-shadow:0 0 0 0.6px rgba(0,0,0,0.05)"></div>
<div style="position:absolute;left:738.8px;top:101px;width:69.70000000000005px;height:19px;box-sizing:border-box;background:linear-gradient(#e2dfdd,#cbc6c3);border:1px solid #efedeb;border-bottom:none;border-radius:5px 5px 0 0;box-shadow:0 -1px 1px rgba(0,0,0,0.10);"></div>
<div style="position:absolute;left:813px;top:98.6px;width:44px;height:23.5px;box-sizing:border-box;background:linear-gradient(#e9e7e5,#dcd8d6);border:1px solid #f6f4f3;border-bottom:none;border-radius:5px 5px 0 0;box-shadow:0 -1px 1px rgba(0,0,0,0.12);z-index:2"></div>
<div style="position:absolute;left:860.8px;top:101px;width:91.5px;height:19px;box-sizing:border-box;background:linear-gradient(#e2dfdd,#cbc6c3);border:1px solid #efedeb;border-bottom:none;border-radius:5px 5px 0 0;box-shadow:0 -1px 1px rgba(0,0,0,0.10);"></div>
<div style="position:absolute;left:957.6px;top:101px;width:74.39999999999998px;height:19px;box-sizing:border-box;background:linear-gradient(#e2dfdd,#cbc6c3);border:1px solid #efedeb;border-bottom:none;border-radius:5px 5px 0 0;box-shadow:0 -1px 1px rgba(0,0,0,0.10);"></div>
<div style="position:absolute;left:1037.3px;top:101px;width:133.29999999999995px;height:19px;box-sizing:border-box;background:linear-gradient(#e2dfdd,#cbc6c3);border:1px solid #efedeb;border-bottom:none;border-radius:5px 5px 0 0;box-shadow:0 -1px 1px rgba(0,0,0,0.10);"></div>
<div style="position:absolute;left:745.80px;top:104.84px;font-size:12px;line-height:normal;transform:scaleX(1.0945);transform-origin:0 0;letter-spacing:0.583px;color:#2b2725;white-space:pre;z-index:5">Загальні</div>
<div style="position:absolute;left:819.50px;top:104.34px;font-size:12px;line-height:normal;transform:scaleX(1.0656);transform-origin:0 0;letter-spacing:0.405px;color:#2b2725;white-space:pre;z-index:5">Лінія</div>
<div style="position:absolute;left:867.70px;top:104.84px;font-size:12px;line-height:normal;transform:scaleX(1.0882);transform-origin:0 0;letter-spacing:0.598px;color:#2b2725;white-space:pre;z-index:5">Позначення</div>
<div style="position:absolute;left:964.20px;top:104.84px;font-size:12px;line-height:normal;transform:scaleX(1.0815);transform-origin:0 0;letter-spacing:0.570px;color:#2b2725;white-space:pre;z-index:5">Значення</div>
<div style="position:absolute;left:1043.30px;top:104.84px;font-size:12px;line-height:normal;transform:scaleX(1.1023);transform-origin:0 0;letter-spacing:0.617px;color:#2b2725;white-space:pre;z-index:5">Позначки похибок</div>
<div style="position:absolute;left:743.00px;top:124.14px;font-size:12px;line-height:normal;transform:scaleX(1.0867);transform-origin:0 0;letter-spacing:0.572px;color:#2b2725;white-space:pre;z-index:5;font-weight:700">З’єднання:</div>
<div style="position:absolute;left:743.00px;top:147.04px;font-size:12px;line-height:normal;transform:scaleX(1.0721);transform-origin:0 0;letter-spacing:0.673px;color:#2b2725;white-space:pre;z-index:5">Тип</div>
<div style="position:absolute;left:879.7px;top:141.7px;width:461.20000000000005px;height:23.600000000000023px;background:linear-gradient(#ebe9e7,#d6d2cf);box-shadow:0 1px 1px rgba(0,0,0,0.35), inset 0 1px 0 rgba(255,255,255,0.8);border-radius:4px;outline:1px solid #6ea9d8;outline-offset:0px;"></div>
<svg style="position:absolute;left:884px;top:144px;overflow:visible;z-index:6" width="22" height="20" viewBox="0 0 22 20"><path d="M3.5 3 Q12 5 17.5 17" stroke="#111" stroke-width="1.2" fill="none"/><circle cx="3.5" cy="3" r="2.2" fill="#111"/><circle cx="17.5" cy="17" r="2.2" fill="#111"/></svg>
<div style="position:absolute;left:907.90px;top:146.64px;font-size:12px;line-height:normal;transform:scaleX(1.0956);transform-origin:0 0;letter-spacing:0.542px;color:#2b2725;white-space:pre;z-index:5">кубічний сплайн (природний)</div>
<svg style="position:absolute;left:0;top:0;z-index:6" width="1355" height="625"><path d="M1327.3 151.9 L1331.5 156.1 L1335.7 151.9" stroke="#111" stroke-width="1.7" fill="none"/></svg>
<div style="position:absolute;left:743.00px;top:174.54px;font-size:12px;line-height:normal;transform:scaleX(1.0993);transform-origin:0 0;letter-spacing:0.540px;color:#2b2725;white-space:pre;z-index:5">Точки інтерполяції</div>
<div style="position:absolute;left:880.5px;top:174px;width:459.0px;height:15.800000000000011px;box-sizing:border-box;background:#fff;border-radius:4px;border:1px solid rgba(0,0,0,0.16);border-top-color:rgba(0,0,0,0.30);box-shadow:inset 0 1px 1px rgba(0,0,0,0.12), 0 1px 0 rgba(255,255,255,0.55);"></div>
<div style="position:absolute;left:885.30px;top:174.84px;font-size:12px;line-height:normal;transform:scaleX(1.0000);transform-origin:0 0;letter-spacing:0.000px;color:#2b2725;white-space:pre;z-index:5">1</div>
<svg style="position:absolute;left:0;top:0;z-index:6" width="1355" height="625"><path d="M1328.0 180.3 L1331.5 176.8 L1335.0 180.3" stroke="#111" stroke-width="1.3" fill="none"/><path d="M1328.0 183.3 L1331.5 186.8 L1335.0 183.3" stroke="#999" stroke-width="1.3" fill="none"/></svg>
<div style="position:absolute;left:743.00px;top:198.54px;font-size:12px;line-height:normal;transform:scaleX(1.0582);transform-origin:0 0;letter-spacing:0.470px;color:#2b2725;white-space:pre;z-index:5">Стиль</div>
<div style="position:absolute;left:879.7px;top:197.5px;width:461.20000000000005px;height:16.69999999999999px;background:linear-gradient(#ebe9e7,#d6d2cf);box-shadow:0 1px 1px rgba(0,0,0,0.35), inset 0 1px 0 rgba(255,255,255,0.8);border-radius:4px;"></div>
<div style="position:absolute;left:886.7px;top:205.8px;width:47px;height:1px;background:#111;z-index:6"></div>
<div style="position:absolute;left:938.10px;top:198.94px;font-size:12px;line-height:normal;transform:scaleX(1.0645);transform-origin:0 0;letter-spacing:0.416px;color:#2b2725;white-space:pre;z-index:5">суцільна</div>
<svg style="position:absolute;left:0;top:0;z-index:6" width="1355" height="625"><path d="M1327.3 203.9 L1331.5 208.1 L1335.7 203.9" stroke="#111" stroke-width="1.7" fill="none"/></svg>
<div style="position:absolute;left:743.00px;top:224.74px;font-size:12px;line-height:normal;transform:scaleX(1.0866);transform-origin:0 0;letter-spacing:0.592px;color:#2b2725;white-space:pre;z-index:5">Колір</div>
<div style="position:absolute;left:879.7px;top:222.1px;width:461.20000000000005px;height:17.599999999999994px;background:linear-gradient(#ebe9e7,#d6d2cf);box-shadow:0 1px 1px rgba(0,0,0,0.35), inset 0 1px 0 rgba(255,255,255,0.8);border-radius:4px;"></div>
<div style="position:absolute;left:892.9px;top:226.5px;width:434.1px;height:9.7px;background:#000;z-index:6"></div>
<div style="position:absolute;left:743.00px;top:250.04px;font-size:12px;line-height:normal;transform:scaleX(1.0913);transform-origin:0 0;letter-spacing:0.743px;color:#2b2725;white-space:pre;z-index:5">Ширина</div>
<div style="position:absolute;left:880.5px;top:248.3px;width:459.0px;height:17.0px;box-sizing:border-box;background:#fff;border-radius:4px;border:1px solid rgba(0,0,0,0.16);border-top-color:rgba(0,0,0,0.30);box-shadow:inset 0 1px 1px rgba(0,0,0,0.12), 0 1px 0 rgba(255,255,255,0.55);"></div>
<div style="position:absolute;left:885.20px;top:250.04px;font-size:12px;line-height:normal;transform:scaleX(1.1153);transform-origin:0 0;letter-spacing:0.662px;color:#2b2725;white-space:pre;z-index:5">1,00 тч</div>
<svg style="position:absolute;left:0;top:0;z-index:6" width="1355" height="625"><path d="M1328.0 255.3 L1331.5 251.8 L1335.0 255.3" stroke="#111" stroke-width="1.3" fill="none"/><path d="M1328.0 258.3 L1331.5 261.8 L1335.0 258.3" stroke="#111" stroke-width="1.3" fill="none"/></svg>
<div style="position:absolute;left:743.00px;top:273.54px;font-size:12px;line-height:normal;transform:scaleX(1.1019);transform-origin:0 0;letter-spacing:0.623px;color:#2b2725;white-space:pre;z-index:5">Непрозорість</div>
<div style="position:absolute;left:880.5px;top:272.3px;width:459.0px;height:16.69999999999999px;box-sizing:border-box;background:#fff;border-radius:4px;border:1px solid rgba(0,0,0,0.16);border-top-color:rgba(0,0,0,0.30);box-shadow:inset 0 1px 1px rgba(0,0,0,0.12), 0 1px 0 rgba(255,255,255,0.55);"></div>
<div style="position:absolute;left:885.20px;top:274.04px;font-size:12px;line-height:normal;transform:scaleX(1.0598);transform-origin:0 0;letter-spacing:0.480px;color:#2b2725;white-space:pre;z-index:5">100 %</div>
<svg style="position:absolute;left:0;top:0;z-index:6" width="1355" height="625"><path d="M1328.0 279.3 L1331.5 275.8 L1335.0 279.3" stroke="#999" stroke-width="1.3" fill="none"/><path d="M1328.0 282.3 L1331.5 285.8 L1335.0 282.3" stroke="#111" stroke-width="1.3" fill="none"/></svg>
<div style="position:absolute;left:743.00px;top:311.84px;font-size:12px;line-height:normal;transform:scaleX(1.0661);transform-origin:0 0;letter-spacing:0.356px;color:#2b2725;white-space:pre;z-index:5;font-weight:700">Тіні ліній:</div>
<div style="position:absolute;left:743.00px;top:332.04px;font-size:12px;line-height:normal;transform:scaleX(1.0721);transform-origin:0 0;letter-spacing:0.673px;color:#2b2725;white-space:pre;z-index:5">Тип</div>
<div style="position:absolute;left:879.7px;top:331.2px;width:461.20000000000005px;height:15.5px;background:linear-gradient(#ebe9e7,#d6d2cf);box-shadow:0 1px 1px rgba(0,0,0,0.35), inset 0 1px 0 rgba(255,255,255,0.8);border-radius:4px;"></div>
<div style="position:absolute;left:883.60px;top:330.94px;font-size:12px;line-height:normal;transform:scaleX(1.1051);transform-origin:0 0;letter-spacing:0.538px;color:#2b2725;white-space:pre;z-index:5">без тіней ліній</div>
<svg style="position:absolute;left:0;top:0;z-index:6" width="1355" height="625"><path d="M1327.3 336.9 L1331.5 341.1 L1335.7 336.9" stroke="#111" stroke-width="1.7" fill="none"/></svg>
<div style="position:absolute;left:743.00px;top:356.64px;font-size:12px;line-height:normal;transform:scaleX(1.0582);transform-origin:0 0;letter-spacing:0.470px;color:#2b2725;white-space:pre;z-index:5">Стиль</div>
<div style="position:absolute;left:879.7px;top:355.7px;width:461.20000000000005px;height:16.0px;background:linear-gradient(#d8d4d1,#c9c4c1);box-shadow:0 1px 1px rgba(0,0,0,0.30), inset 0 1px 0 rgba(255,255,255,0.5);border-radius:4px;"></div>
<div style="position:absolute;left:887px;top:363.8px;width:46px;height:1px;background:#9a9592;z-index:6"></div>
<div style="position:absolute;left:937.50px;top:356.94px;font-size:12px;line-height:normal;transform:scaleX(1.0708);transform-origin:0 0;letter-spacing:0.454px;color:#a39f9c;white-space:pre;z-index:5">суцільна</div>
<svg style="position:absolute;left:0;top:0;z-index:6" width="1355" height="625"><path d="M1327.3 361.9 L1331.5 366.1 L1335.7 361.9" stroke="#a7a29f" stroke-width="1.4" fill="none"/></svg>
<div style="position:absolute;left:743.00px;top:382.34px;font-size:12px;line-height:normal;transform:scaleX(1.0866);transform-origin:0 0;letter-spacing:0.592px;color:#2b2725;white-space:pre;z-index:5">Колір</div>
<div style="position:absolute;left:879.7px;top:380.8px;width:461.20000000000005px;height:16.80000000000001px;background:linear-gradient(#d8d4d1,#c9c4c1);box-shadow:0 1px 1px rgba(0,0,0,0.30), inset 0 1px 0 rgba(255,255,255,0.5);border-radius:4px;"></div>
<div style="position:absolute;left:892.7px;top:384.5px;width:434.3px;height:9.8px;box-sizing:border-box;background:#d8d4d1;border-top:1.5px solid #5c5755;border-left:1.5px solid #5c5755;z-index:6"></div>
<div style="position:absolute;left:743.00px;top:407.54px;font-size:12px;line-height:normal;transform:scaleX(1.0913);transform-origin:0 0;letter-spacing:0.743px;color:#2b2725;white-space:pre;z-index:5">Ширина</div>
<div style="position:absolute;left:880.5px;top:406.4px;width:459.0px;height:16.5px;box-sizing:border-box;background:#f4f4f3;border-radius:4px;border:1px solid rgba(0,0,0,0.16);border-top-color:rgba(0,0,0,0.30);box-shadow:inset 0 1px 1px rgba(0,0,0,0.12), 0 1px 0 rgba(255,255,255,0.55);"></div>
<div style="position:absolute;left:885.20px;top:407.34px;font-size:12px;line-height:normal;transform:scaleX(1.1153);transform-origin:0 0;letter-spacing:0.662px;color:#a39f9c;white-space:pre;z-index:5">1,00 тч</div>
<svg style="position:absolute;left:0;top:0;z-index:6" width="1355" height="625"><path d="M1328.0 413.3 L1331.5 409.8 L1335.0 413.3" stroke="#a7a29f" stroke-width="1.3" fill="none"/><path d="M1328.0 416.3 L1331.5 419.8 L1335.0 416.3" stroke="#a7a29f" stroke-width="1.3" fill="none"/></svg>
<div style="position:absolute;left:743.00px;top:431.54px;font-size:12px;line-height:normal;transform:scaleX(1.1019);transform-origin:0 0;letter-spacing:0.623px;color:#2b2725;white-space:pre;z-index:5">Непрозорість</div>
<div style="position:absolute;left:880.5px;top:430.4px;width:459.0px;height:16.5px;box-sizing:border-box;background:#f4f4f3;border-radius:4px;border:1px solid rgba(0,0,0,0.16);border-top-color:rgba(0,0,0,0.30);box-shadow:inset 0 1px 1px rgba(0,0,0,0.12), 0 1px 0 rgba(255,255,255,0.55);"></div>
<div style="position:absolute;left:885.20px;top:431.24px;font-size:12px;line-height:normal;transform:scaleX(1.0598);transform-origin:0 0;letter-spacing:0.480px;color:#a39f9c;white-space:pre;z-index:5">100 %</div>
<svg style="position:absolute;left:0;top:0;z-index:6" width="1355" height="625"><path d="M1328.0 437.3 L1331.5 433.8 L1335.0 437.3" stroke="#a7a29f" stroke-width="1.3" fill="none"/><path d="M1328.0 440.3 L1331.5 443.8 L1335.0 440.3" stroke="#a7a29f" stroke-width="1.3" fill="none"/></svg>
<div style="position:absolute;left:1207px;top:557.4px;width:21.7px;height:18.6px;background:linear-gradient(#dedad8,#c9c4c1);border-radius:5px;box-shadow:0 1px 1px rgba(0,0,0,0.3), inset 0 1px 0 rgba(255,255,255,0.6)"></div>
<svg style="position:absolute;left:1209.8px;top:559.5px;overflow:visible;z-index:6" width="16" height="15" viewBox="0 0 16 15"><path d="M2.5 0.5 H10 L14 4.5 V9 H2.5Z" fill="#eceae8" stroke="#a8a4a1" stroke-width="0.7"/><path d="M10 0.5 V4.5 H14" fill="#d4d1ce" stroke="#aaa" stroke-width="0.6"/><path d="M0.5 9 H15.5 V14.5 H0.5Z" fill="#bdb9b6"/><path d="M0.5 11.5 H15.5" stroke="#a39f9c" stroke-width="0.8"/></svg>
<div style="position:absolute;left:1232.9px;top:557.4px;width:21.7px;height:18.6px;background:linear-gradient(#dedad8,#c9c4c1);border-radius:5px;box-shadow:0 1px 1px rgba(0,0,0,0.3), inset 0 1px 0 rgba(255,255,255,0.6)"></div>
<svg style="position:absolute;left:1235.7px;top:559.5px;overflow:visible;z-index:6" width="16" height="15" viewBox="0 0 16 15"><rect x="1" y="1" width="14" height="13.5" fill="#262626"/><rect x="3" y="1.5" width="10" height="6" fill="#f7f9fb"/><path d="M4.5 3.2 H11.5 M4.5 5.2 H11.5" stroke="#7eaed6" stroke-width="0.8"/><rect x="4" y="9.5" width="8" height="5" fill="#c4c4c4"/><rect x="5" y="10.5" width="2" height="3.5" fill="#222"/></svg>
<div style="position:absolute;left:1259px;top:557.4px;width:21.7px;height:18.6px;background:linear-gradient(#dedad8,#c9c4c1);border-radius:5px;box-shadow:0 1px 1px rgba(0,0,0,0.3), inset 0 1px 0 rgba(255,255,255,0.6)"></div>
<svg style="position:absolute;left:1261.8px;top:559.5px;overflow:visible;z-index:6" width="16" height="15" viewBox="0 0 16 15"><rect x="1" y="1" width="14" height="13.5" fill="#262626"/><rect x="3" y="1.5" width="10" height="6" fill="#f7f9fb"/><path d="M4.5 3.2 H11.5 M4.5 5.2 H11.5" stroke="#7eaed6" stroke-width="0.8"/><rect x="4" y="9.5" width="8" height="5" fill="#c4c4c4"/><path d="M1.5 14.5 L14.5 1" stroke="#1a1a1a" stroke-width="3.2"/><path d="M1.8 14.2 L14.2 1.3" stroke="#e8b030" stroke-width="1.8"/></svg>
<div style="position:absolute;left:1295px;top:557.4px;width:21.7px;height:18.6px;background:linear-gradient(#dedad8,#c9c4c1);border-radius:5px;box-shadow:0 1px 1px rgba(0,0,0,0.3), inset 0 1px 0 rgba(255,255,255,0.6)"></div>
<svg style="position:absolute;left:1297.8px;top:559.5px;overflow:visible;z-index:6" width="16" height="15" viewBox="0 0 16 15"><rect x="1" y="1" width="9" height="10" fill="#ebe9e7" stroke="#b0aca9" stroke-width="0.7"/><path d="M5 5 H14.5 V12.5 L12 15 H5Z" fill="#f3f1f0" stroke="#a9a5a2" stroke-width="0.7"/></svg>
<div style="position:absolute;left:1320.9px;top:557.4px;width:21.7px;height:18.6px;background:linear-gradient(#dedad8,#c9c4c1);border-radius:5px;box-shadow:0 1px 1px rgba(0,0,0,0.3), inset 0 1px 0 rgba(255,255,255,0.6)"></div>
<svg style="position:absolute;left:1323.7px;top:559.5px;overflow:visible;z-index:6" width="16" height="15" viewBox="0 0 16 15"><rect x="0.8" y="2" width="9.5" height="12.5" fill="#dcdad8" stroke="#4a4a4a" stroke-width="0.8"/><rect x="3.3" y="0.5" width="4.5" height="2.5" fill="#ddd" stroke="#666" stroke-width="0.6"/><path d="M6 6 H14.5 V13 L12.5 15 H6Z" fill="#f3f1f0" stroke="#a9a5a2" stroke-width="0.7"/></svg>
<div style="position:absolute;left:0px;top:0px;width:1px;height:625px;background:linear-gradient(rgba(255,255,255,0.75),rgba(255,255,255,0.3) 60px,rgba(255,255,255,0.25))"></div>
<div style="position:absolute;left:0px;top:0px;width:1.5px;height:1.5px;background:#5aaee6"></div>
<div style="position:absolute;left:0px;top:622px;width:2px;height:3px;background:#3d8fd0"></div>
</body></html>
